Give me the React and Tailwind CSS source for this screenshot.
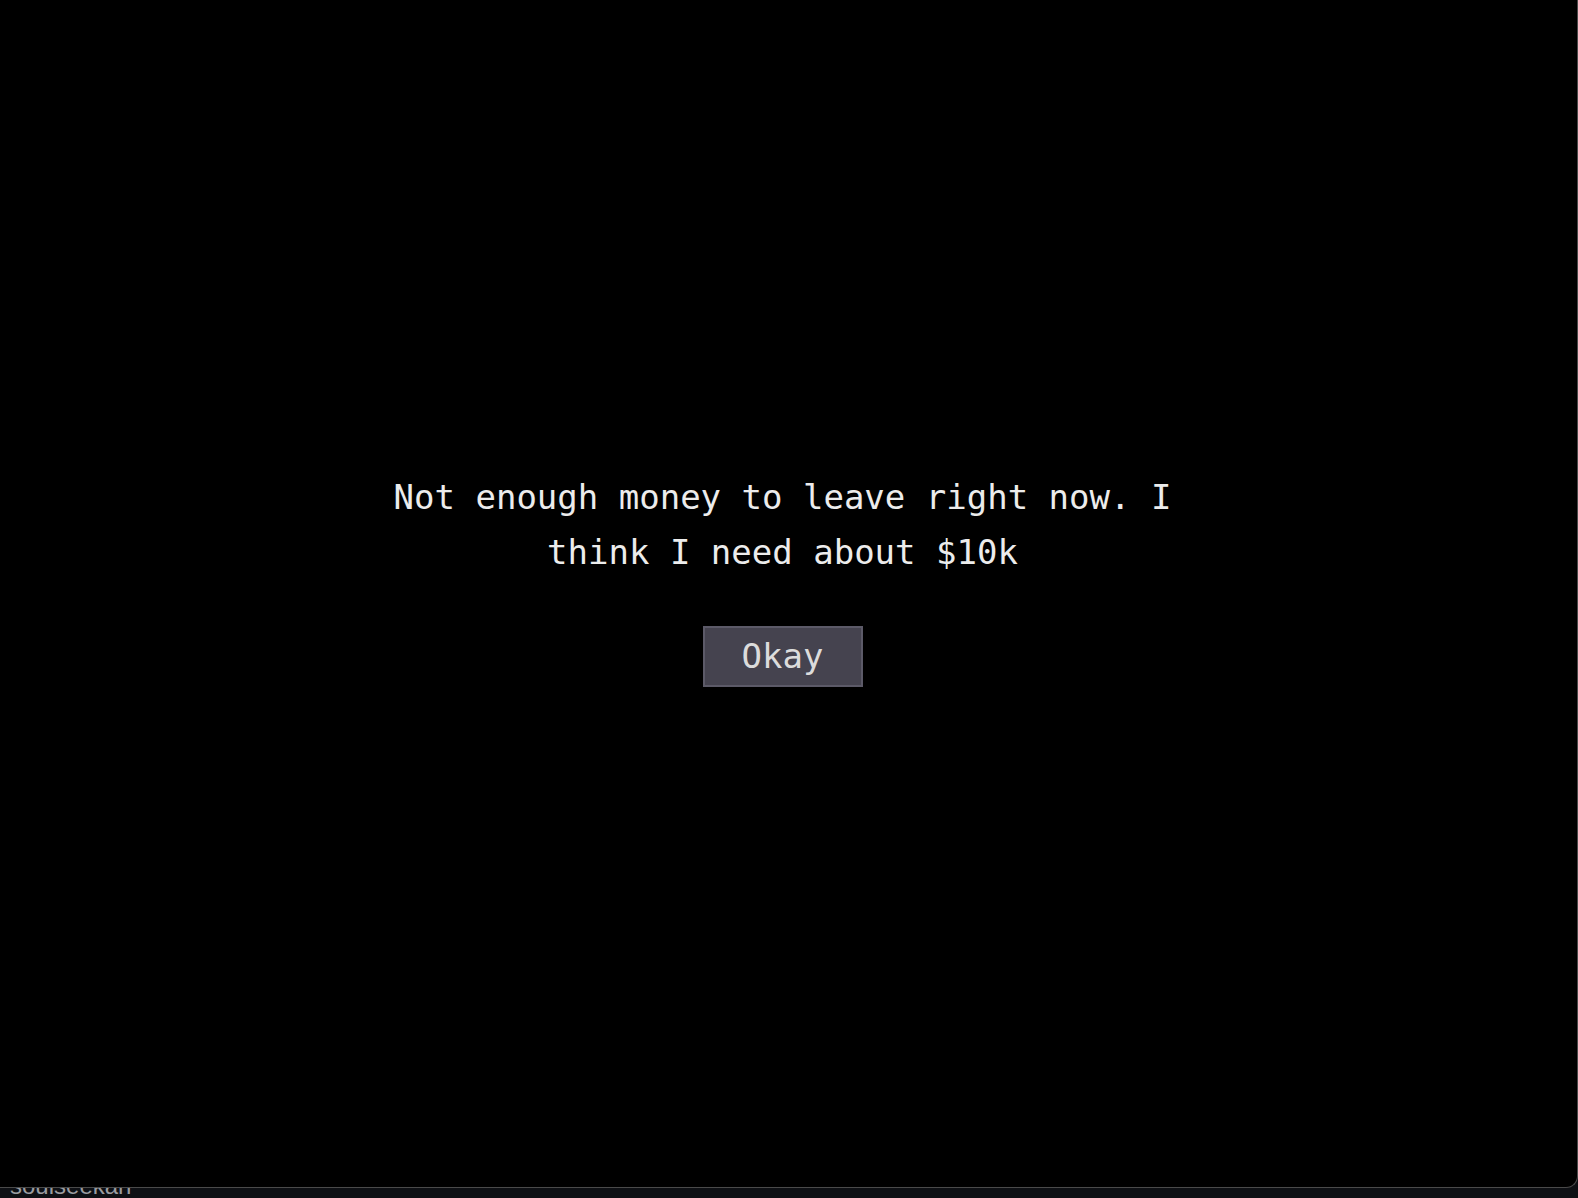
import React from 'react';

function GameDialog({ message, onConfirm }) {
  return (
    <div className="flex flex-col items-center pt-[470px] pr-[12px]">
      <p className="max-w-[820px] text-center text-[34px] leading-[55px] text-[#ececec] font-['DejaVu_Sans_Mono',monospace]">
        {message}
      </p>
      <button
        onClick={onConfirm}
        className="mt-[46px] w-[160px] h-[61px] flex items-center justify-center bg-[#45434f] border-2 border-[#5c5a68] text-[34px] text-[#dcdcdc] font-['DejaVu_Sans_Mono',monospace]"
      >
        Okay
      </button>
    </div>
  );
}

export default function App() {
  return (
    <div className="w-[1578px] h-[1198px] bg-[#0e1014] overflow-hidden">
      <div className="h-[1188px] bg-black border-b border-r border-[#4a4a4a] rounded-br-[12px]">
        <GameDialog message="Not enough money to leave right now. I think I need about $10k" onConfirm={() => {}} />
      </div>
      <div className="h-[10px] overflow-hidden pl-[10px]">
        <div className="-mt-[15px] text-[24px] leading-[26px] text-[#9a9ca0] font-['Liberation_Sans',sans-serif]">soulseekah</div>
      </div>
    </div>
  );
}
